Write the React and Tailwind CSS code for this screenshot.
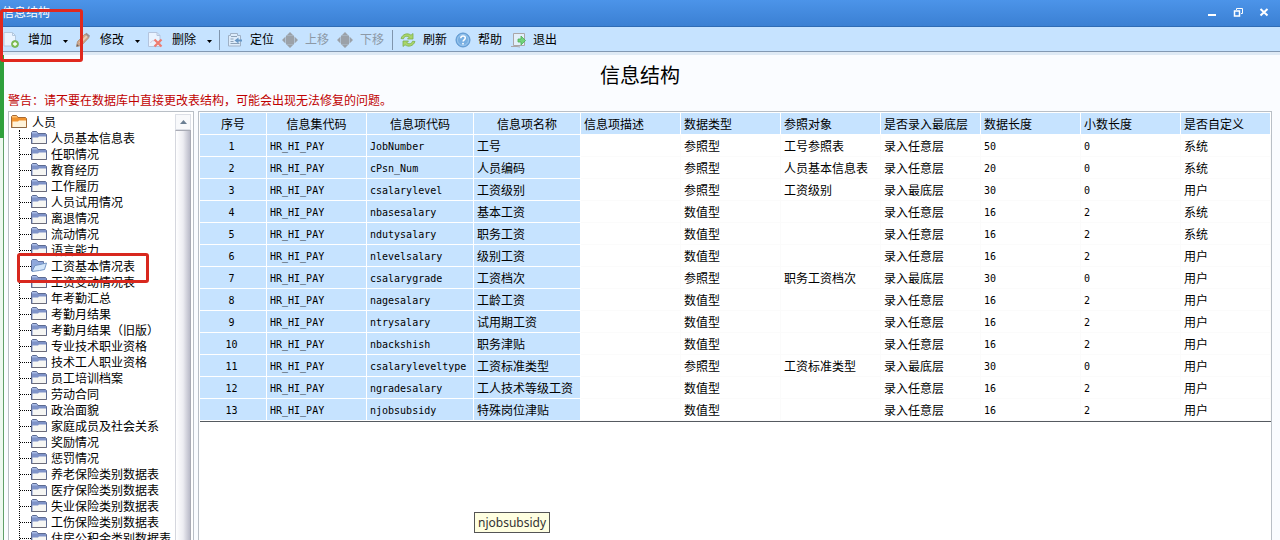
import React from 'react';

const TREE = [
  '人员基本信息表', '任职情况', '教育经历', '工作履历', '人员试用情况', '离退情况', '流动情况', '语言能力',
  '工资基本情况表', '工资变动情况表', '年考勤汇总', '考勤月结果', '考勤月结果（旧版）', '专业技术职业资格',
  '技术工人职业资格', '员工培训档案', '劳动合同', '政治面貌', '家庭成员及社会关系', '奖励情况', '惩罚情况',
  '养老保险类别数据表', '医疗保险类别数据表', '失业保险类别数据表', '工伤保险类别数据表', '住房公积金类别数据表',
];
const SELECTED = '工资基本情况表';

const COLUMNS = [
  { label: '序号', width: 'w-[67px]' },
  { label: '信息集代码', width: 'w-[100px]' },
  { label: '信息项代码', width: 'w-[107px]' },
  { label: '信息项名称', width: 'w-[107px]' },
  { label: '信息项描述', width: 'w-[100px]' },
  { label: '数据类型', width: 'w-[100px]' },
  { label: '参照对象', width: 'w-[100px]' },
  { label: '是否录入最底层', width: 'w-[100px]' },
  { label: '数据长度', width: 'w-[100px]' },
  { label: '小数长度', width: 'w-[100px]' },
  { label: '是否自定义', width: 'w-auto' },
];

// code, name, type, reference, level, length, decimals, owner
const ROWS = [
  ['JobNumber', '工号', '参照型', '工号参照表', '录入任意层', 50, 0, '系统'],
  ['cPsn_Num', '人员编码', '参照型', '人员基本信息表', '录入任意层', 20, 0, '系统'],
  ['csalarylevel', '工资级别', '参照型', '工资级别', '录入最底层', 30, 0, '用户'],
  ['nbasesalary', '基本工资', '数值型', '', '录入任意层', 16, 2, '系统'],
  ['ndutysalary', '职务工资', '数值型', '', '录入任意层', 16, 2, '系统'],
  ['nlevelsalary', '级别工资', '数值型', '', '录入任意层', 16, 2, '用户'],
  ['csalarygrade', '工资档次', '参照型', '职务工资档次', '录入最底层', 30, 0, '用户'],
  ['nagesalary', '工龄工资', '数值型', '', '录入任意层', 16, 2, '用户'],
  ['ntrysalary', '试用期工资', '数值型', '', '录入任意层', 16, 2, '用户'],
  ['nbackshish', '职务津贴', '数值型', '', '录入任意层', 16, 2, '用户'],
  ['csalaryleveltype', '工资标准类型', '参照型', '工资标准类型', '录入最底层', 30, 0, '用户'],
  ['ngradesalary', '工人技术等级工资', '数值型', '', '录入任意层', 16, 2, '用户'],
  ['njobsubsidy', '特殊岗位津贴', '数值型', '', '录入任意层', 16, 2, '用户'],
];

const Icon = ({ children }) => (
  <svg width="16" height="16" viewBox="0 0 16 16" fill="none" className="shrink-0" aria-hidden="true">{children}</svg>
);

const AddIcon = () => (
  <Icon>
    <path d="M1 .5h8.500l3 3v10.500H1z" fill="#eaf4ff" stroke="#b3c8de" />
    <path d="M9.500 .5v3h3" stroke="#b3c8de" />
    <circle cx="12" cy="12" r="3.500" fill="#82c356" stroke="#69a84a" strokeWidth=".7" />
    <path d="M12 10v4M10 12h4" stroke="#fff" strokeWidth="1.300" />
  </Icon>
);

const EditIcon = () => (
  <Icon>
    <path d="M1.500 14.500l1-5L10 2l4 3.500-7.500 8z" fill="#cda68a" stroke="#b08e76" strokeWidth=".8" />
    <path d="M4.800 11.200L12 4" stroke="#e6cdb9" strokeWidth="1.800" />
    <path d="M10 2l1.500-1.300L15 3.800l-1 1.700z" fill="#9a8f8f" />
    <path d="M1.500 14.500l.5-2.400 2 1.800z" fill="#666" />
  </Icon>
);

const DeleteIcon = () => (
  <Icon>
    <path d="M1.500 .5H10l3 3v11H1.500z" fill="#e9f3ff" stroke="#b4c4dd" />
    <path d="M10 .5v3h3" stroke="#b4c4dd" />
    <path d="M3.500 11c2-4 3-1 4-3" stroke="#d8c9d8" />
    <path d="M7.500 7.500l7 7M14.500 7.500l-7 7" stroke="#ee7c70" strokeWidth="2.200" />
  </Icon>
);

const LocateIcon = () => (
  <Icon>
    <path d="M1.500 3.500h2v-2h7v2h3v10.500H1.500z" fill="#ddecfb" stroke="#9fb1c6" />
    <path d="M4 4.500h6M3.500 11.500h9M3.500 7h3M3.500 9.500h3" stroke="#8ea2b8" />
    <path d="M15 8.500h-4" stroke="#6797c6" strokeWidth="2" />
    <path d="M7.500 8.500l4-3v6z" fill="#6797c6" />
  </Icon>
);

const MoveIcon = () => (
  <Icon>
    <path d="M8 0l3.500 3.500h-7zM8 16l-3.500-3.500h7zM0 8l3.500-3.500v7zM16 8l-3.500 3.500v-7z" fill="#9ba1a8" />
    <rect x="4" y="3.500" width="8" height="9" fill="#9ba1a8" />
  </Icon>
);

const RefreshIcon = () => (
  <Icon>
    <path d="M1 6.500C2.500 2 7.500 .5 11 3.200L13 1.500v5.500H7.500l1.700-1.800C6.500 3.500 4 4.500 3.500 6.800z" fill="#a9d56b" stroke="#7bae4b" strokeWidth=".8" />
    <path d="M15 9.500C13.500 14 8.500 15.500 5 12.800L3 14.500V9h5.500l-1.700 1.800c2.700 1.700 5.200.7 5.700-1.600z" fill="#a9d56b" stroke="#7bae4b" strokeWidth=".8" />
  </Icon>
);

const HelpIcon = () => (
  <Icon>
    <circle cx="8" cy="8" r="7" fill="#78afe2" stroke="#5d96cf" />
    <circle cx="8" cy="8" r="5.500" stroke="#a5cdf0" strokeWidth=".8" />
    <path d="M5.800 6.300c0-3 4.500-2.800 4.500-.2 0 1.700-2.200 1.700-2.200 3.400" stroke="#fff" strokeWidth="1.500" />
    <circle cx="8" cy="11.700" r=".9" fill="#fff" />
  </Icon>
);

const ExitIcon = () => (
  <Icon>
    <path d="M3.500 1.500h11v12h-11z" fill="#e3effa" stroke="#aaa6a8" />
    <path d="M1 14.500h6l3 .5" stroke="#aaa6a8" />
    <path d="M8 7h3V4l4.500 4.500L11 13v-3H8z" fill="#72d37a" stroke="#4caf58" strokeWidth=".8" />
  </Icon>
);

const FolderIcon = ({ root }) => (
  <Icon>
    <path d="M.5 13.500v-11l1-1h4l1.500 2h7.500l1 1v9z" fill={root ? '#f0932f' : '#7f93c8'} stroke={root ? '#a76a35' : '#5d6b92'} />
    <path d="M1 3.500V2h4.500l1 1.500z" fill={root ? '#ffc173' : '#a9bce6'} />
    <path d="M1.500 13V7.500H7l1-1h7V13z" fill={root ? '#fff3da' : '#f6f6f3'} />
    <path d="M.5 13.500h15" stroke={root ? '#8c6845' : '#6b6b78'} />
  </Icon>
);

const OpenFolderIcon = () => (
  <Icon>
    <path d="M.5 13V2.500l1-1h4l1.500 2h5.500V7" fill="#8fa8dc" stroke="#6577a3" />
    <path d="M1 13.500L4 7.500l5-1 6.500-1.500-2 6.500-5 1z" fill="#d3e6fa" stroke="#6c8fc0" strokeWidth=".9" />
  </Icon>
);

const DropButton = ({ icon, label }) => (
  <button className="flex h-6 w-[72px] shrink-0 items-center">
    {icon}
    <span className="ml-[9px]">{label}</span>
    <svg width="7" height="4" viewBox="0 0 7 4" className="mt-1 ml-[10px]" aria-hidden="true"><path d="M1 0h5L3.500 3z" fill="#000" /></svg>
  </button>
);

const ToolButton = ({ icon, label, disabled }) => (
  <button disabled={disabled} className="flex h-6 w-[55px] shrink-0 items-center gap-[7px] disabled:text-[#8d99a6]">
    {icon}
    {label}
  </button>
);

const Separator = () => <div className="mr-[7px] h-5 w-px shrink-0 bg-[#7f95ad]" />;

const TitleBar = () => (
  <header className="flex h-[27px] shrink-0 items-center justify-between border-b border-[#2f6cb5] bg-linear-to-b from-[#4c94e9] to-[#3b80d3] pr-[9px] pl-[2px] text-white">
    <span className="leading-4">信息结构</span>
    <div className="flex items-center gap-3">
      <button aria-label="最小化" className="h-3.5 w-3.5">
        <svg width="14" height="14" viewBox="0 0 14 14"><path d="M3 9h8" stroke="#fff" strokeWidth="2" /></svg>
      </button>
      <button aria-label="还原" className="h-3.5 w-3.5">
        <svg width="14" height="14" viewBox="0 0 14 14" fill="none" stroke="#fff">
          <path d="M5.500 4V2.500h6v5H10" />
          <path d="M3.500 5h5v5h-5z" strokeWidth="1.500" />
        </svg>
      </button>
      <button aria-label="关闭" className="h-3.5 w-3.5">
        <svg width="14" height="14" viewBox="0 0 14 14"><path d="M3.500 3l7 6.500M10.500 3l-7 6.500" stroke="#fff" strokeWidth="2" /></svg>
      </button>
    </div>
  </header>
);

const Toolbar = () => (
  <nav className="flex h-[25px] shrink-0 items-center border-b border-[#8299b3] bg-[#c6e3ff] pt-[2px] pl-[3px] text-black">
    <DropButton icon={<AddIcon />} label="增加" />
    <DropButton icon={<EditIcon />} label="修改" />
    <DropButton icon={<DeleteIcon />} label="删除" />
    <Separator />
    <ToolButton icon={<LocateIcon />} label="定位" />
    <ToolButton icon={<MoveIcon />} label="上移" disabled />
    <ToolButton icon={<MoveIcon />} label="下移" disabled />
    <Separator />
    <ToolButton icon={<RefreshIcon />} label="刷新" />
    <ToolButton icon={<HelpIcon />} label="帮助" />
    <ToolButton icon={<ExitIcon />} label="退出" />
  </nav>
);

const Tree = () => (
  <aside className="flex w-[186px] shrink-0 overflow-hidden border border-b-0 border-[#b9bfc6] bg-white pt-[2px]">
    <div className="min-w-0 flex-1 overflow-hidden pl-[2px]">
      <button className="flex h-4 items-center gap-[5px] whitespace-nowrap">
        <FolderIcon root />
        <span className="pt-px">人员</span>
      </button>
      <ul className="ml-2 border-l border-dotted border-black">
        {TREE.map((name) => (
          <li key={name} className="relative flex h-4 items-center">
            <span className="w-[11px] shrink-0 border-t border-dotted border-black" />
            <button className="flex h-4 items-center gap-1 whitespace-nowrap">
              {name === SELECTED ? <OpenFolderIcon /> : <FolderIcon />}
              <span className="pt-px">{name}</span>
            </button>
            {name === SELECTED && (
              <span className="absolute -top-[5px] -left-[3px] z-10 h-[30px] w-[132px] rounded-[3px] border-3 border-[#d8281e]" />
            )}
          </li>
        ))}
      </ul>
    </div>
    <div className="flex w-4 shrink-0 flex-col">
      <button aria-label="向上滚动" className="flex h-4 items-center justify-center border border-[#dcdfe6] bg-[#f8f9fb]">
        <svg width="7" height="4" viewBox="0 0 7 4"><path d="M3.500 0L7 4H0z" fill="#6b7f93" /></svg>
      </button>
      <div className="flex-1 border-x border-t border-[#a9abb5] border-l-[#d5d7de] bg-linear-to-r from-white via-[#ededf2] to-[#b9bac8]" />
    </div>
    <div className="w-[2px] shrink-0" />
  </aside>
);

const Cell = ({ children, head, mono, center }) => (
  <td
    className={`h-[22px] truncate border-r border-b pt-[2px] ${
      head ? 'border-white bg-[#c6e3ff]' : 'border-[#fbfbfb] bg-white'
    } ${mono ? "font-['DejaVu_Sans_Mono',monospace] text-[10px]" : ''} ${center ? 'pr-[3px] text-center' : 'pl-[3px]'}`}
  >
    {children}
  </td>
);

const DataTable = () => (
  <section className="min-w-0 flex-1 overflow-hidden border border-b-0 border-[#b9bfc6] bg-white pt-px pl-px">
    <table className="w-full table-fixed border-separate border-spacing-0 border-b border-[#555a60] text-black">
      <thead>
        <tr>
          {COLUMNS.map((col, i) => (
            <th
              key={col.label}
              className={`h-[22px] border-r border-b border-white bg-[#c6e3ff] pt-[2px] font-normal whitespace-nowrap ${col.width} ${
                i < 4 ? 'text-center' : 'pl-[3px] text-left'
              }`}
            >
              {col.label}
            </th>
          ))}
        </tr>
      </thead>
      <tbody>
        {ROWS.map(([code, name, type, refer, level, length, decimals, owner], i) => (
          <tr key={code}>
            <Cell head mono center>{i + 1}</Cell>
            <Cell head mono>HR_HI_PAY</Cell>
            <Cell head mono>{code}</Cell>
            <Cell head>{name}</Cell>
            <Cell />
            <Cell>{type}</Cell>
            <Cell>{refer}</Cell>
            <Cell>{level}</Cell>
            <Cell mono>{length}</Cell>
            <Cell mono>{decimals}</Cell>
            <Cell>{owner}</Cell>
          </tr>
        ))}
      </tbody>
    </table>
  </section>
);

const App = () => (
  <div className="relative flex h-screen flex-col overflow-hidden bg-[#fafcff] font-['Liberation_Sans','Noto_Sans_CJK_SC',sans-serif] text-[12px] leading-4 text-black">
    <TitleBar />
    <Toolbar />
    <div className="h-[3px] shrink-0 bg-[#dfeaf5]" />

    <div className="flex min-h-0 flex-1">
      {/* Edge of the window behind */}
      <div className="flex w-1 shrink-0 flex-col">
        <div className="h-[83px] bg-[#2fa03c]" />
        <div className="flex-1 border-r border-[#5f9f68] bg-[#edf8ef]" />
      </div>

      <main className="flex min-w-0 flex-1 flex-col pr-2 pl-1">
        <h1 className="pt-[7px] pb-[3px] text-center text-[20px] leading-7">信息结构</h1>
        <p className="mb-[2px] leading-4 text-[#c00000]">
          警告：请不要在数据库中直接更改表结构，可能会出现无法修复的问题。
        </p>
        <div className="flex min-h-0 flex-1 gap-1">
          <Tree />
          <DataTable />
        </div>
      </main>
    </div>

    {/* Marker round the add button */}
    <div className="pointer-events-none absolute top-[9px] left-0 h-[53px] w-[83px] rounded-[3px] border-3 border-[#e0281e]" />

    <div role="tooltip" className="absolute top-[512px] left-[474px] border border-[#555] bg-[#ffffe1] px-[3px] font-['Noto_Sans',sans-serif] text-[12px] leading-[19px] text-[#333]">
      njobsubsidy
    </div>
  </div>
);

export default App;
